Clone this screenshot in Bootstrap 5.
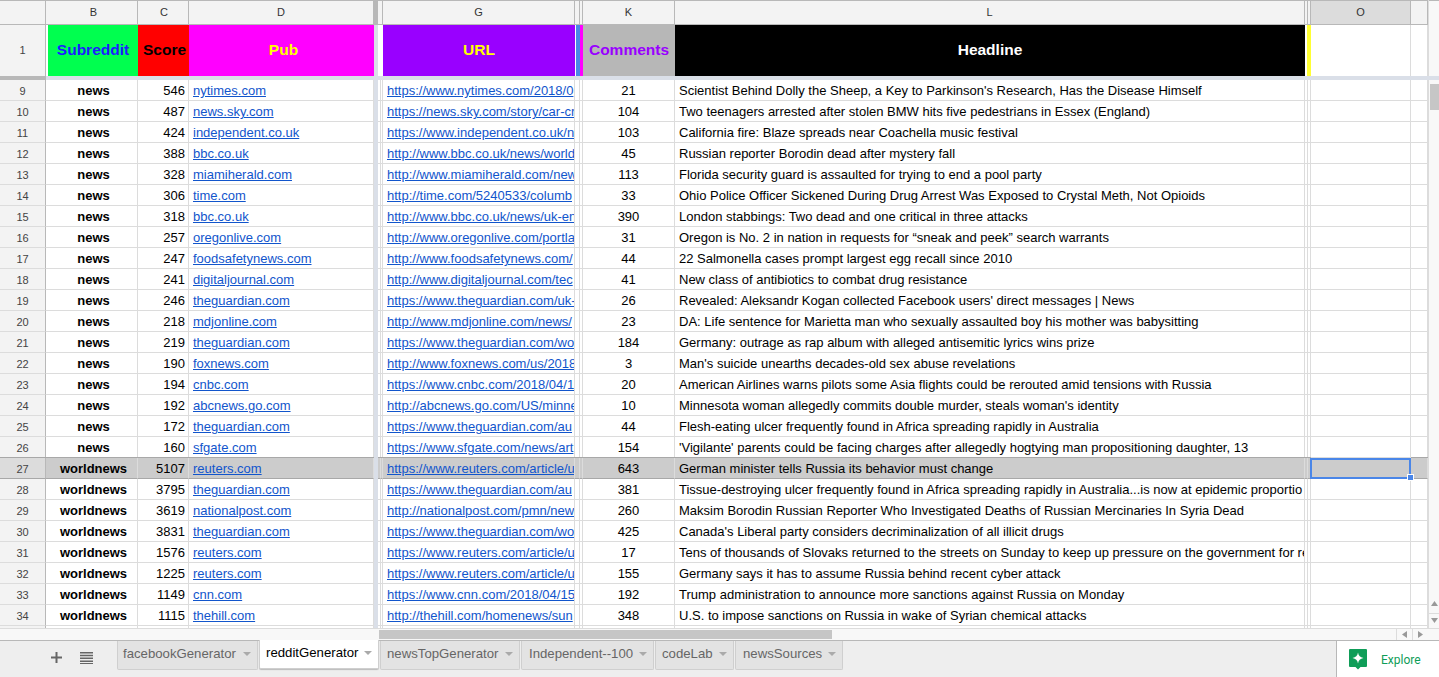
<!DOCTYPE html>
<html lang="en">
<head>
  <meta charset="UTF-8">
  <title>redditGenerator</title>
  <link href="https://cdn.jsdelivr.net/npm/bootstrap@5.3.0/dist/css/bootstrap.min.css" rel="stylesheet">
  <style>
    body { height: 677px; overflow: hidden; background: #fff; font-family: "Liberation Sans", Arial, sans-serif; font-size: 13px; color: #000; }
    .sheet-top { height: 628px; }
    .sheet-grid { width: 1428px; }
    .gr { display: grid; grid-template-columns: 46px 2px 90px 51px 185px 4px 3px 2px 192px 1px 4px 3px 92px 630px 3px 3px 100px 17px; }
    .gr > div { border-right: 1px solid #dcdcdc; border-bottom: 1px solid #dcdcdc; overflow: hidden; white-space: nowrap; line-height: 22px; background: #fff; }
    .gr > .gut, .gr > .nob { border-right: 0; }
    .gr > .rownum { background: #f3f3f3; border-right-color: #b8b8b8; border-bottom-color: #dcdcdc; text-align: center; font-size: 11px; color: #444; }
    .gr > .freeze { background: #dadfe8; border: 0; }
    .gr > .txt { padding: 0 3px 0 4px; }
    .gr > .txt-long { padding-right: 0; }
    .gr > .ctr { text-align: center; }
    .gr > .rgt { text-align: right; }
    .gr > .nudge { padding-left: 2px; }
    .gr a { color: #1155cc; }

    .gr-head { height: 25px; border-top: 1px solid #b8b8b8; }
    .gr-head > div { background: #f3f3f3; border-right-color: #b8b8b8; border-bottom-color: #b8b8b8; text-align: center; font-size: 11px; line-height: 22px; color: #333; }
    .gr-head > .freeze { background: #b8b8b8; }
    .gr-head > .hdr-on { background: #dcdcdc; }
    .gr-title { height: 51px; }
    .gr-title > div { font-size: 15.5px; font-weight: 700; line-height: 49px; text-align: center; border-bottom: 0; border-right: 0; }
    .gr-title > .rownum { font-size: 11px; font-weight: 400; border-right: 1px solid #b8b8b8; line-height: 50px; }
    .gr-title > .gut { background: #fff; }
    .gr-title > .t-line { border-right: 1px solid #dcdcdc; }
    .t-sub { background: #00ff4f !important; color: #1c1cff; }
    .t-score { background: #ff0000 !important; padding-left: 2px; }
    .t-pub { background: #ff00ff !important; color: #ffff00; padding-left: 4px; }
    .t-url { background: #9900ff !important; color: #ffff00; }
    .t-blue { background: #4a86e8 !important; }
    .t-mag { background: #ff00ff !important; }
    .t-com { background: #b7b7b7 !important; color: #9900ff; }
    .t-head { background: #000 !important; color: #fff; }
    .gr-title > .t-yel { background: #ffff33; margin-left: -1px; }

    .freeze-line { height: 4px; background: #dadfe8; }
    .freeze-line .freeze-num { width: 46px; background: #b8b8b8; }

    .gr-data { height: 21px; }
    .gr-picked > div { background: #cccccc; border-bottom-color: #a8a8a8; box-shadow: 0 -1px 0 #a8a8a8; }
    .gr-picked > .rownum { background: #dcdcdc; border-bottom-color: #a8a8a8; }
    .gr-picked > .freeze { background: #dadfe8; box-shadow: none; }
    .gr-picked > .cell-active { position: relative; overflow: visible; border: 0; box-shadow: inset 0 0 0 2px #4a86e8; margin-left: -1px; }
    .cell-handle { position: absolute; right: -3px; bottom: -2px; width: 7px; height: 7px; background: #4a86e8; border: 1px solid #fff; }

    .gr-stub { height: 2px; }
    .gr-stub > div { border-bottom: 0; }

    .vbar { width: 11px; background: #f8f8f8; border-left: 1px solid #dcdcdc; }
    .vbar-top { height: 76px; border-top: 1px solid #b8b8b8; }
    .vbar-gap { height: 4px; margin-left: -1px; background: #dadfe8; }
    .vbar-thumb { height: 26px; width: 9px; margin: 4px 0 0 1px; background: #c6c6c6; }
    .vbar-btn { height: 14px; color: #888; }
    .vbar-up { margin-bottom: 3px; }
    .vbar-down { margin-bottom: 1px; border-top: 1px solid #dcdcdc; }

    .hbar { height: 12px; background: #f8f8f8; border-top: 1px solid #dcdcdc; }
    .hbar-thumb { width: 453px; height: 9px; margin: 1px 0 0 379px; background: #c6c6c6; }
    .hbar-btn { width: 16px; height: 11px; border-left: 1px solid #dcdcdc; }
    .hbar-end { width: 11px; }

    .tabs-strip { height: 37px; background: #eeeeee; border-top: 1px solid #b8b8b8; }
    .tabs-tools { width: 117px; padding: 10px 0 0 50px; gap: 17px; }
    .sheet-tab { height: 29px; margin-right: 1px; padding: 0 6px 0 6px; background: #e3e3e3; border: 1px solid #cfcfcf; border-top: 0; border-radius: 0 0 2px 2px; color: #666; font-size: 13.2px; line-height: 26px; white-space: nowrap; justify-content: space-between; }
    .sheet-tab-on { background: #fff; color: #000; margin-top: -1px; box-shadow: 0 1px 1px #bbb; }
    .tab-w141 { width: 141px; padding-left: 5px; }
    .tab-w120 { width: 120px; }
    .tab-w140 { width: 140px; }
    .tab-w133 { width: 133px; padding-left: 7px; }
    .tab-w79 { width: 79px; }
    .tab-w108 { width: 108px; padding-left: 7px; }
    .tab-caret { width: 0; height: 0; border-left: 4px solid transparent; border-right: 4px solid transparent; border-top: 4px solid #aaa; margin-top: 11px; }
    .explore-box { width: 103px; background: #fff; border-left: 1px solid #b8b8b8; padding: 8px 0 0 12px; gap: 14px; color: #0f9d58; font-size: 12px; font-family: Roboto, "Liberation Sans", sans-serif; line-height: 23px; }
  </style>
</head>
<body>

<div class="d-flex sheet-top">
  <div class="sheet-grid">
    <!-- intestazione colonne -->
    <div class="gr gr-head">
      <div></div><div class="gut"></div><div class="nudge">B</div><div class="nudge">C</div><div>D</div><div class="freeze"></div><div class="nob"></div><div></div><div>G</div><div class="nob"></div><div></div><div></div><div>K</div><div>L</div><div></div><div></div><div class="hdr-on">O</div><div></div>
    </div>
    <!-- riga 1 bloccata -->
    <div class="gr gr-title">
      <div class="rownum">1</div><div class="gut"></div>
      <div class="t-sub">Subreddit</div><div class="t-score">Score</div><div class="t-pub">Pub</div>
      <div class="freeze"></div><div class="nob"></div><div class="nob"></div>
      <div class="t-url">URL</div><div class="nob"></div><div class="t-blue"></div><div class="t-mag"></div>
      <div class="t-com">Comments</div><div class="t-head">Headline</div>
      <div class="nob"></div><div class="t-yel"></div><div class="t-line"></div><div class="t-line"></div>
    </div>
    <div class="freeze-line d-flex"><div class="freeze-num"></div></div>
    <div id="rows"></div>
    <div class="gr gr-stub">
      <div class="rownum"></div><div class="gut"></div><div></div><div></div><div></div><div class="freeze"></div><div></div><div></div><div></div><div class="nob"></div><div></div><div></div><div></div><div></div><div></div><div></div><div></div><div></div>
    </div>
  </div>
  <div class="vbar d-flex flex-column">
    <div class="vbar-top"></div>
    <div class="vbar-gap"></div>
    <div class="vbar-thumb"></div>
    <div class="flex-grow-1"></div>
    <div class="vbar-btn vbar-up d-flex align-items-center justify-content-center"><svg width="7" height="5" viewBox="0 0 7 5"><path d="M3.500 0 7 5H0z" fill="#999"/></svg></div>
    <div class="vbar-btn vbar-down d-flex align-items-center justify-content-center"><svg width="7" height="5" viewBox="0 0 7 5"><path d="M0 0h7L3.500 5z" fill="#999"/></svg></div>
  </div>
</div>

<!-- scrollbar orizzontale -->
<div class="hbar d-flex">
  <div class="flex-grow-1"><div class="hbar-thumb"></div></div>
  <div class="hbar-btn d-flex align-items-center justify-content-center"><svg width="5" height="7" viewBox="0 0 5 7"><path d="M5 0v7L0 3.500z" fill="#999"/></svg></div>
  <div class="hbar-btn d-flex align-items-center justify-content-center"><svg width="5" height="7" viewBox="0 0 5 7"><path d="M0 0l5 3.500L0 7z" fill="#999"/></svg></div>
  <div class="hbar-end"></div>
</div>

<!-- fogli -->
<div class="tabs-strip d-flex">
  <div class="tabs-tools d-flex">
    <svg width="13" height="13" viewBox="0 0 13 13"><path d="M5.500 1h2v4.500H12v2H7.500V12h-2V7.500H1v-2h4.500z" fill="#666"/></svg>
    <svg width="13" height="13" viewBox="0 0 13 13"><path d="M0 1h13v1.500H0zM0 3.800h13v1.500H0zM0 6.600h13v1.500H0zM0 9.400h13v1.500H0zM0 12h13v1H0z" fill="#666"/></svg>
  </div>
  <div class="sheet-tab tab-w141 d-flex"><span>facebookGenerator</span><i class="tab-caret"></i></div>
  <div class="sheet-tab sheet-tab-on tab-w120 d-flex"><span>redditGenerator</span><i class="tab-caret"></i></div>
  <div class="sheet-tab tab-w140 d-flex"><span>newsTopGenerator</span><i class="tab-caret"></i></div>
  <div class="sheet-tab tab-w133 d-flex"><span>Independent--100</span><i class="tab-caret"></i></div>
  <div class="sheet-tab tab-w79 d-flex"><span>codeLab</span><i class="tab-caret"></i></div>
  <div class="sheet-tab tab-w108 d-flex"><span>newsSources</span><i class="tab-caret"></i></div>
  <div class="flex-grow-1"></div>
  <div class="explore-box d-flex">
    <svg width="18" height="21" viewBox="0 0 18 21"><path d="M1 0h16a1 1 0 0 1 1 1v16a1 1 0 0 1-1 1h-5.500L9 20.500 6.500 18H1a1 1 0 0 1-1-1V1a1 1 0 0 1 1-1z" fill="#0f9d58"/><path d="M9 3.500c.6 3.300 2.200 4.900 5.500 5.500-3.300.6-4.900 2.200-5.500 5.500-.6-3.300-2.200-4.900-5.500-5.500 3.300-.6 4.900-2.200 5.500-5.500z" fill="#fff"/></svg>
    <span>Explore</span>
  </div>
</div>

<script>
  const righe = [
    [9,'news',546,'nytimes.com','https://www.nytimes.com/2018/0',21,"Scientist Behind Dolly the Sheep, a Key to Parkinson's Research, Has the Disease Himself"],
    [10,'news',487,'news.sky.com','https://news.sky.com/story/car-cr',104,'Two teenagers arrested after stolen BMW hits five pedestrians in Essex (England)'],
    [11,'news',424,'independent.co.uk','https://www.independent.co.uk/n',103,'California fire: Blaze spreads near Coachella music festival'],
    [12,'news',388,'bbc.co.uk','http://www.bbc.co.uk/news/world',45,'Russian reporter Borodin dead after mystery fall'],
    [13,'news',328,'miamiherald.com','http://www.miamiherald.com/new',113,'Florida security guard is assaulted for trying to end a pool party'],
    [14,'news',306,'time.com','http://time.com/5240533/columb',33,'Ohio Police Officer Sickened During Drug Arrest Was Exposed to Crystal Meth, Not Opioids'],
    [15,'news',318,'bbc.co.uk','http://www.bbc.co.uk/news/uk-en',390,'London stabbings: Two dead and one critical in three attacks'],
    [16,'news',257,'oregonlive.com','http://www.oregonlive.com/portla',31,'Oregon is No. 2 in nation in requests for “sneak and peek” search warrants'],
    [17,'news',247,'foodsafetynews.com','http://www.foodsafetynews.com/',44,'22 Salmonella cases prompt largest egg recall since 2010'],
    [18,'news',241,'digitaljournal.com','http://www.digitaljournal.com/tec',41,'New class of antibiotics to combat drug resistance'],
    [19,'news',246,'theguardian.com','https://www.theguardian.com/uk-',26,"Revealed: Aleksandr Kogan collected Facebook users' direct messages | News"],
    [20,'news',218,'mdjonline.com','http://www.mdjonline.com/news/',23,'DA: Life sentence for Marietta man who sexually assaulted boy his mother was babysitting'],
    [21,'news',219,'theguardian.com','https://www.theguardian.com/wo',184,'Germany: outrage as rap album with alleged antisemitic lyrics wins prize'],
    [22,'news',190,'foxnews.com','http://www.foxnews.com/us/2018',3,"Man's suicide unearths decades-old sex abuse revelations"],
    [23,'news',194,'cnbc.com','https://www.cnbc.com/2018/04/1',20,'American Airlines warns pilots some Asia flights could be rerouted amid tensions with Russia'],
    [24,'news',192,'abcnews.go.com','http://abcnews.go.com/US/minne',10,"Minnesota woman allegedly commits double murder, steals woman's identity"],
    [25,'news',172,'theguardian.com','https://www.theguardian.com/au',44,'Flesh-eating ulcer frequently found in Africa spreading rapidly in Australia'],
    [26,'news',160,'sfgate.com','https://www.sfgate.com/news/art',154,"'Vigilante' parents could be facing charges after allegedly hogtying man propositioning daughter, 13"],
    [27,'worldnews',5107,'reuters.com','https://www.reuters.com/article/u',643,'German minister tells Russia its behavior must change'],
    [28,'worldnews',3795,'theguardian.com','https://www.theguardian.com/au',381,'Tissue-destroying ulcer frequently found in Africa spreading rapidly in Australia...is now at epidemic proportio'],
    [29,'worldnews',3619,'nationalpost.com','http://nationalpost.com/pmn/new',260,'Maksim Borodin Russian Reporter Who Investigated Deaths of Russian Mercinaries In Syria Dead'],
    [30,'worldnews',3831,'theguardian.com','https://www.theguardian.com/wo',425,"Canada's Liberal party considers decriminalization of all illicit drugs"],
    [31,'worldnews',1576,'reuters.com','https://www.reuters.com/article/u',17,'Tens of thousands of Slovaks returned to the streets on Sunday to keep up pressure on the government for re'],
    [32,'worldnews',1225,'reuters.com','https://www.reuters.com/article/u',155,'Germany says it has to assume Russia behind recent cyber attack'],
    [33,'worldnews',1149,'cnn.com','https://www.cnn.com/2018/04/15',192,'Trump administration to announce more sanctions against Russia on Monday'],
    [34,'worldnews',1115,'thehill.com','http://thehill.com/homenews/sun',348,'U.S. to impose sanctions on Russia in wake of Syrian chemical attacks']
  ];

  const contenitore = document.getElementById('rows');
  righe.forEach(r => {
    const scelta = r[0] === 27;
    const cellaO = scelta ? '<div class="cell-active"><span class="cell-handle"></span></div>' : '<div></div>';
    const riga = `
      <div class="gr gr-data ${scelta ? 'gr-picked' : ''}">
        <div class="rownum">${r[0]}</div><div class="gut"></div>
        <div class="ctr fw-bold nudge">${r[1]}</div>
        <div class="txt rgt">${r[2]}</div>
        <div class="txt"><a href="#">${r[3]}</a></div>
        <div class="freeze"></div><div></div><div></div>
        <div class="txt txt-long"><a href="#">${r[4]}</a></div>
        <div class="nob"></div><div></div><div></div>
        <div class="ctr">${r[5]}</div>
        <div class="txt txt-long">${r[6]}</div>
        <div></div><div></div>${cellaO}<div></div>
      </div>`;
    contenitore.insertAdjacentHTML('beforeend', riga);
  });
</script>

<script src="https://cdn.jsdelivr.net/npm/bootstrap@5.3.0/dist/js/bootstrap.bundle.min.js"></script>
</body>
</html>
